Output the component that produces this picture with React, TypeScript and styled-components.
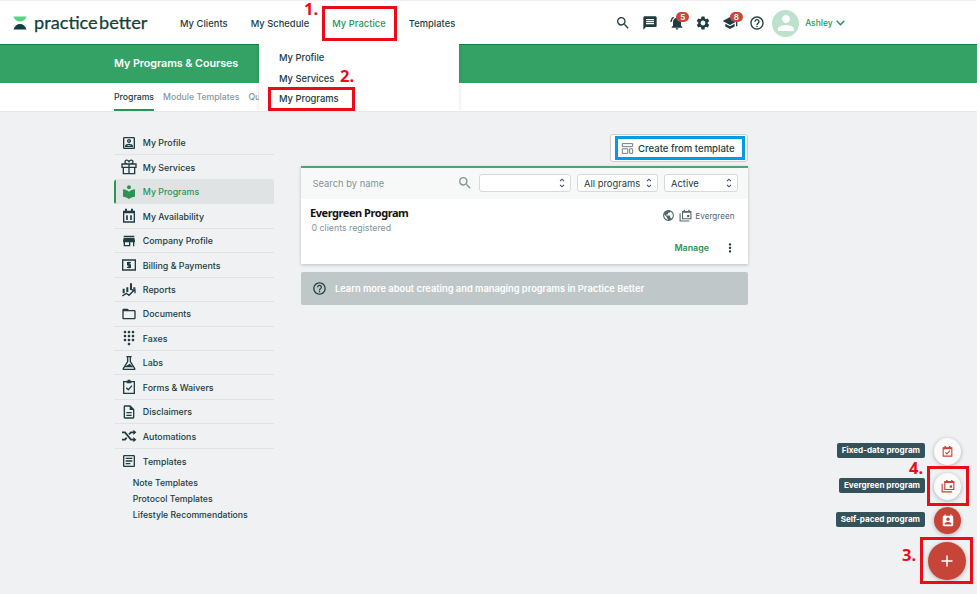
import React from "react";
import styled, { createGlobalStyle, css } from "styled-components";
import type { IconType } from "react-icons";
import {
  MdSearch, MdMessage, MdNotificationsActive, MdSettings, MdSchool, MdHelpOutline, MdPerson,
  MdLocalLibrary, MdStore, MdFolderOpen, MdDialpad, MdPublic, MdMoreVert,
  MdPermContactCalendar, MdOutlineArticle, MdOutlineDescription, MdOutlinePortrait,
} from "react-icons/md";

const color = {
  ink: "#203c40",
  green: "#2a9455",
  bar: "#33a264",
  red: "#ec0c18",
  brick: "#c64438",
  page: "#eff1f3",
};

const GlobalStyle = createGlobalStyle`
  * { box-sizing: border-box; }
  body { margin: 0; background: #fff; }
  button, input { font: inherit; color: inherit; border: 0; background: none; padding: 0; margin: 0; }
`;

type GlyphProps = { size?: number | string };
const glyph = (children: React.ReactNode) =>
  function Glyph({ size = 16 }: GlyphProps) {
    return (
      <svg width={size} height={size} viewBox="0 0 24 24" fill="none" stroke="currentColor" strokeWidth="2">
        {children}
      </svg>
    );
  };

const GiftIcon = glyph(
  <>
    <path d="M1.500 7.500h21v5h-21zM3.500 12.500V22h17v-9.500M12 7.500V22M12 7.500C9 7.500 6 6.500 6 4s4-3.500 6 0c2-3.500 6-2.500 6 0s-3 3.500-6 3.500" />
  </>
);
const AvailabilityIcon = glyph(
  <>
    <path d="M4 5h16v16H4z" />
    <path d="M4 6.500h16M7.500 1v5M16.500 1v5" strokeWidth="3" />
    <path d="M9 11v7M15 11v7" strokeWidth="2.500" />
  </>
);
const BillingIcon = glyph(
  <>
    <path d="M2.500 4.500h19v15h-19z" />
    <path d="M15 8.500h-5v3.300h4v3.700H9M12 7v10" />
  </>
);
const ReportsIcon = glyph(
  <>
    <path d="M4 10v7M9.500 8v7M15 2v10M20 8v3" strokeWidth="3" />
    <path d="M2 21l6-4 4 3 8-8M16 12h5v5" />
  </>
);
const LabsIcon = glyph(<path d="M8 2.500h8M10 3v7L3.500 20v1.500h17V20L14 10V3M8 17.500h8l-3-3z" />);
const ClipboardIcon = glyph(
  <>
    <path d="M4 4h16v17.500H4z" />
    <path d="M8.500 4.500h7M12 1v3" strokeWidth="4" />
    <path d="M8 13l3 3 5.500-6" />
  </>
);
const ShuffleIcon = glyph(
  <>
    <path d="M1.500 6.500H6L15 17.500h6M1.500 17.500H6l2.500-3M12 9.500l3-3h6" strokeWidth="2.600" />
    <path d="M18.500 2.500v8l4.500-4zM18.500 13.500v8l4.500-4z" fill="currentColor" stroke="none" />
  </>
);
const TemplateIcon = glyph(
  <path d="M2.500 3h19v5.500h-19zM2.500 12.500h10V21h-10zM16 12.500h5.500V21H16z" strokeWidth="1.800" />
);
const CalendarCheckIcon = glyph(
  <>
    <path d="M4 5h16v15.500H4z" />
    <path d="M4 6.500h16M8 2v4M16 2v4" strokeWidth="3" />
    <path d="M8 13.500l3 3 5.500-6" />
  </>
);
const CalendarStackIcon = glyph(
  <>
    <path d="M6.500 4.500H22V18H6.500zM2 8v14h17" />
    <path d="M6.500 5.500H22M10 1.500v4M18.500 1.500v4" strokeWidth="2.600" />
    <path d="M15 11h4v4h-4z" fill="currentColor" stroke="none" />
  </>
);

const Page = styled.div`
  position: relative;
  width: 980px;
  height: 594px;
  overflow: hidden;
  font-family: Inter, "Liberation Sans", sans-serif;
  color: ${color.ink};
  background: ${color.page};
  border-right: 3px solid #fff;
`;

const Header = styled.header`
  display: flex;
  align-items: center;
  height: 45px;
  padding: 1px 0 0 13px;
  background: #fff;
  border-top: 1px solid #f7f0f1;
  border-bottom: 1px solid #167f49;
`;

const Logo = styled.div`
  display: flex;
  align-items: center;
  width: 167px;
  gap: 7px;
  color: #123f3b;
  font-family: Lato, sans-serif;
  font-size: 18.200px;
  line-height: 20px;
  white-space: nowrap;
  word-spacing: -3.300px;
  -webkit-text-stroke: 0.25px #123f3b;
  span { padding-bottom: 2px; }
`;

const Nav = styled.nav`
  display: flex;
  gap: 23px;
  width: 436px;
  padding-top: 1px;
`;

const NavLink = styled.a<{ $active?: boolean }>`
  font-size: 9.300px;
  font-weight: 500;
  letter-spacing: 0.06px;
  line-height: 14px;
  white-space: nowrap;
  color: ${(p) => (p.$active ? color.green : color.ink)};
`;

const HeaderTools = styled.div`
  display: flex;
  align-items: center;
  gap: 12px;
`;

const ToolButton = styled.button`
  position: relative;
  display: flex;
  width: 14.700px;
  height: 16px;
  align-items: center;
  justify-content: center;
  svg { flex: none; }
`;

const Count = styled.span`
  position: absolute;
  top: -3px;
  left: 7px;
  width: 13px;
  height: 10px;
  border-radius: 5px;
  background: #c9483c;
  color: #fff;
  font-size: 8px;
  font-weight: 600;
  line-height: 10px;
  text-align: center;
`;

const Account = styled.div`
  display: flex;
  align-items: center;
  margin-left: -4px;
  color: ${color.green};
  font-size: 8.500px;
  font-weight: 500;
  gap: 3px;
`;

const Avatar = styled.span`
  display: flex;
  align-items: center;
  justify-content: center;
  width: 27px;
  height: 27px;
  margin-right: 3px;
  border-radius: 50%;
  background: #bce1cd;
  color: #fff;
`;

const TitleBar = styled.div`
  display: flex;
  align-items: center;
  height: 38px;
  padding: 0 0 1px 114px;
  background: ${color.bar};
  color: #fff;
  font-size: 10.750px;
  font-weight: 600;
  letter-spacing: -0.05px;
`;

const Tabs = styled.div`
  display: flex;
  gap: 9px;
  height: 28.500px;
  padding-left: 114px;
  background: #fff;
  border-bottom: 1px solid #e6e9ea;
`;

const Tab = styled.a<{ $active?: boolean }>`
  font-size: 8.700px;
  font-weight: 500;
  line-height: 28px;
  height: 28px;
  white-space: nowrap;
  color: ${(p) => (p.$active ? color.ink : "#8a979b")};
  border-bottom: 2px solid ${(p) => (p.$active ? color.green : "transparent")};
`;

const Body = styled.div`
  display: flex;
  gap: 27px;
  padding: 19.500px 0 0 114px;
`;

const Sidebar = styled.aside`
  width: 160px;
`;

const SideItem = styled.a<{ $active?: boolean }>`
  display: flex;
  align-items: center;
  gap: 6.300px;
  height: 24.440px;
  padding: 0.400px 0 0 6.500px;
  font-size: 8.850px;
  font-weight: 500;
  border-bottom: 1px solid #dfe3e4;
  svg { flex: none; }
  &:last-of-type { border-bottom: 0; }
  ${(p) =>
    p.$active &&
    css`
      color: ${color.green};
      background: #dfe3e3;
      border-left: 2px solid ${color.green};
      border-radius: 2px;
      padding: 0 0 0 4.500px;
    `}
`;

const SubList = styled.div`
  display: flex;
  flex-direction: column;
  padding: 2px 0 0 18.800px;
  font-size: 8.700px;
  font-weight: 500;
  line-height: 16px;
  white-space: nowrap;
`;

const Main = styled.main`
  display: flex;
  flex-direction: column;
  width: 447px;
  padding-top: 3px;
`;

const TemplateButton = styled.button`
  align-self: flex-end;
  display: flex;
  align-items: center;
  gap: 4px;
  width: 138px;
  height: 28px;
  padding: 0 0 0 10px;
  margin-bottom: 3.500px;
  border: 1px solid #c9ced1;
  border-radius: 3px;
  background: #fff;
  font-size: 9.550px;
  font-weight: 500;
  white-space: nowrap;
  svg { color: #6a7a7e; flex: none; }
`;

const Card = styled.section`
  height: 98px;
  border-top: 2px solid #4aa775;
  background: #fff;
  box-shadow: 0 1px 3px rgba(30, 50, 60, 0.25);
`;

const Filters = styled.div`
  display: flex;
  align-items: center;
  height: 31px;
  padding-left: 11.500px;
  background: #f7f9f9;
`;

const SearchField = styled.label`
  display: flex;
  align-items: center;
  justify-content: space-between;
  width: 160px;
  margin-right: 6.500px;
  color: #859398;
  font-size: 9.400px;
`;

const Select = styled.button<{ $width: number }>`
  display: flex;
  align-items: center;
  justify-content: space-between;
  width: ${(p) => p.$width}px;
  height: 18px;
  margin-right: 6px;
  padding: 0 5px 0 6px;
  border: 1px solid #d5dadc;
  border-radius: 3px;
  background: #fff;
  font-size: 9.400px;
  white-space: nowrap;
`;

const ProgramRow = styled.div`
  display: flex;
  justify-content: space-between;
  padding: 7px 13px 0 9px;
`;

const ProgramName = styled.h2`
  margin: -1px 0 1px;
  font: 700 11px/15px "Noto Sans", sans-serif;
  letter-spacing: -0.450px;
  color: #111;
`;

const Registered = styled.p`
  margin: 0 0 0 1.500px;
  color: #859398;
  font-size: 8.800px;
  line-height: 14px;
`;

const ProgramMeta = styled.div`
  display: flex;
  align-items: center;
  gap: 4px;
  height: 20px;
  margin-right: 0.500px;
  color: #54666a;
  font-size: 8.150px;
  white-space: nowrap;
  svg + svg { margin-right: -0.500px; }
`;

const RowActions = styled.div`
  display: flex;
  justify-content: flex-end;
  align-items: center;
  gap: 14px;
  padding-top: 15px;
  margin-right: -2px;
  font-size: 8.900px;
  font-weight: 600;
  color: ${color.green};
  svg { color: ${color.ink}; }
`;

const HelpBanner = styled.div`
  display: flex;
  align-items: center;
  gap: 8px;
  height: 33px;
  margin-top: 8px;
  padding-left: 11px;
  border-radius: 2px;
  background: #bfc7c9;
  color: #fff;
  font-size: 9.300px;
  font-weight: 600;
  svg { color: ${color.ink}; }
`;

const Dropdown = styled.div`
  position: absolute;
  top: 43px;
  left: 259px;
  width: 200px;
  height: 68px;
  padding: 5.300px 0 0 20px;
  background: #fff;
  box-shadow: 0 0 4px rgba(20, 40, 40, 0.15);
  font-size: 9.350px;
  font-weight: 500;
  line-height: 20.400px;
  display: flex;
  flex-direction: column;
  clip-path: inset(0 -5px 0 -5px);
`;

const FloatingActions = styled.div`
  position: absolute;
  right: 16px;
  top: 438px;
  display: flex;
  flex-direction: column;
  align-items: flex-end;
  gap: 7.600px;
`;

const FloatingRow = styled.div`
  display: flex;
  align-items: center;
  gap: 9px;
`;

const Tip = styled.span`
  height: 15px;
  margin-bottom: 2px;
  padding: 0 5px;
  border-radius: 2px;
  background: #35525a;
  color: #fff;
  font-size: 8.120px;
  font-weight: 700;
  line-height: 15px;
  white-space: nowrap;
`;

const RoundButton = styled.button<{ $solid?: boolean; $large?: boolean }>`
  display: flex;
  align-items: center;
  justify-content: center;
  width: ${(p) => (p.$large ? 38 : 27)}px;
  height: ${(p) => (p.$large ? 38 : 27)}px;
  margin-right: ${(p) => (p.$large ? -5 : 0)}px;
  border-radius: 50%;
  background: ${(p) => (p.$solid ? color.brick : "#fafafa")};
  color: ${(p) => (p.$solid ? "#fff" : color.brick)};
  box-shadow: 0 1px 4px rgba(0, 0, 0, 0.28);
`;

const Marker = styled.div<{ $x: number; $y: number; $w: number; $h: number; $tone?: string }>`
  position: absolute;
  left: ${(p) => p.$x}px;
  top: ${(p) => p.$y}px;
  width: ${(p) => p.$w}px;
  height: ${(p) => p.$h}px;
  border: 3px solid ${(p) => p.$tone ?? color.red};
`;

const Step = styled.span<{ $x: number; $y: number }>`
  position: absolute;
  left: ${(p) => p.$x}px;
  top: ${(p) => p.$y}px;
  color: ${color.red};
  font: 700 16.500px/18px "Open Sans", sans-serif;
`;

const LogoMark = () => (
  <svg width="14" height="14" viewBox="0 0 14 14">
    <path d="M0.500 0.500h13C12.500 4 10 5.500 7 5.500S1.500 4 0.500 0.500z" fill="#55d583" />
    <path d="M0.500 13.500h13C12.500 10 10 8 7 8S1.500 10 0.500 13.500z" fill="#123f3b" />
  </svg>
);

const Chevron = () => (
  <svg width="9" height="6" viewBox="0 0 9 6" fill="none" stroke="currentColor" strokeWidth="1.500">
    <path d="M0.700 0.800L4.500 4.700 8.300 0.800" />
  </svg>
);

const SortArrows = () => (
  <svg width="6" height="10" viewBox="0 0 6 10" fill="none" stroke="#3c5177" strokeWidth="1.100">
    <path d="M1 3.200L3 1.200l2 2M1 6.800l2 2 2-2" />
  </svg>
);

const PlusIcon = () => (
  <svg width="12" height="12" viewBox="0 0 12 12" stroke="currentColor" strokeWidth="1.500">
    <path d="M6 0.500v11M0.500 6h11" />
  </svg>
);

const sideItems: [string, IconType | React.FC<GlyphProps>][] = [
  ["My Profile", MdOutlinePortrait],
  ["My Services", GiftIcon],
  ["My Programs", MdLocalLibrary],
  ["My Availability", AvailabilityIcon],
  ["Company Profile", MdStore],
  ["Billing & Payments", BillingIcon],
  ["Reports", ReportsIcon],
  ["Documents", MdFolderOpen],
  ["Faxes", MdDialpad],
  ["Labs", LabsIcon],
  ["Forms & Waivers", ClipboardIcon],
  ["Disclaimers", MdOutlineDescription],
  ["Automations", ShuffleIcon],
  ["Templates", MdOutlineArticle],
];

const tools: [IconType, string?][] = [
  [MdSearch],
  [MdMessage],
  [MdNotificationsActive, "5"],
  [MdSettings],
  [MdSchool, "8"],
  [MdHelpOutline],
];

export default function App() {
  return (
    <>
      <GlobalStyle />
      <Page>
        <Header>
          <Logo><LogoMark /><span>practice better</span></Logo>
          <Nav>
            <NavLink>My Clients</NavLink>
            <NavLink>My Schedule</NavLink>
            <NavLink $active>My Practice</NavLink>
            <NavLink>Templates</NavLink>
          </Nav>
          <HeaderTools>
            {tools.map(([Icon, count], i) => (
              <ToolButton key={i}><Icon size={16} />{count && <Count>{count}</Count>}</ToolButton>
            ))}
            <Account><Avatar><MdPerson size={24} /></Avatar>Ashley<Chevron /></Account>
          </HeaderTools>
        </Header>
        <TitleBar>My Programs &amp; Courses</TitleBar>
        <Tabs>
          <Tab $active>Programs</Tab>
          <Tab>Module Templates</Tab>
          <Tab>Qu</Tab>
        </Tabs>
        <Body>
          <Sidebar>
            {sideItems.map(([label, Icon]) => (
              <SideItem key={label} $active={label === "My Programs"}>
                <Icon size={16} />{label}
              </SideItem>
            ))}
            <SubList>
              <span>Note Templates</span>
              <span>Protocol Templates</span>
              <span>Lifestyle Recommendations</span>
            </SubList>
          </Sidebar>
          <Main>
            <TemplateButton><TemplateIcon size={13} />Create from template</TemplateButton>
            <Card>
              <Filters>
                <SearchField>Search by name<MdSearch size={16} /></SearchField>
                <Select $width={92}><span /><SortArrows /></Select>
                <Select $width={81}>All programs<SortArrows /></Select>
                <Select $width={74}>Active<SortArrows /></Select>
              </Filters>
              <ProgramRow>
                <div>
                  <ProgramName>Evergreen Program</ProgramName>
                  <Registered>0 clients registered</Registered>
                </div>
                <div>
                  <ProgramMeta><MdPublic size={13} /><CalendarStackIcon size={13} />Evergreen</ProgramMeta>
                  <RowActions>Manage<MdMoreVert size={14} /></RowActions>
                </div>
              </ProgramRow>
            </Card>
            <HelpBanner><MdHelpOutline size={15} />Learn more about creating and managing programs in Practice Better</HelpBanner>
          </Main>
        </Body>
        <Dropdown>
          <span>My Profile</span>
          <span>My Services</span>
          <span>My Programs</span>
        </Dropdown>
        <FloatingActions>
          <FloatingRow><Tip>Fixed-date program</Tip><RoundButton><CalendarCheckIcon size={13} /></RoundButton></FloatingRow>
          <FloatingRow><Tip>Evergreen program</Tip><RoundButton><CalendarStackIcon size={14} /></RoundButton></FloatingRow>
          <FloatingRow><Tip>Self-paced program</Tip><RoundButton $solid><MdPermContactCalendar size={14} /></RoundButton></FloatingRow>
          <RoundButton $solid $large><PlusIcon /></RoundButton>
        </FloatingActions>
        <Marker $x={322} $y={6} $w={75} $h={35} />
        <Marker $x={268} $y={87} $w={87} $h={24} />
        <Marker $x={927} $y={466} $w={42} $h={40} />
        <Marker $x={920} $y={537} $w={53} $h={47} />
        <Marker $x={615} $y={136} $w={130} $h={24} $tone="#009ce6" />
        <Step $x={304} $y={0}>1.</Step>
        <Step $x={340} $y={67}>2.</Step>
        <Step $x={902} $y={546}>3.</Step>
        <Step $x={909} $y={459}>4.</Step>
      </Page>
    </>
  );
}
